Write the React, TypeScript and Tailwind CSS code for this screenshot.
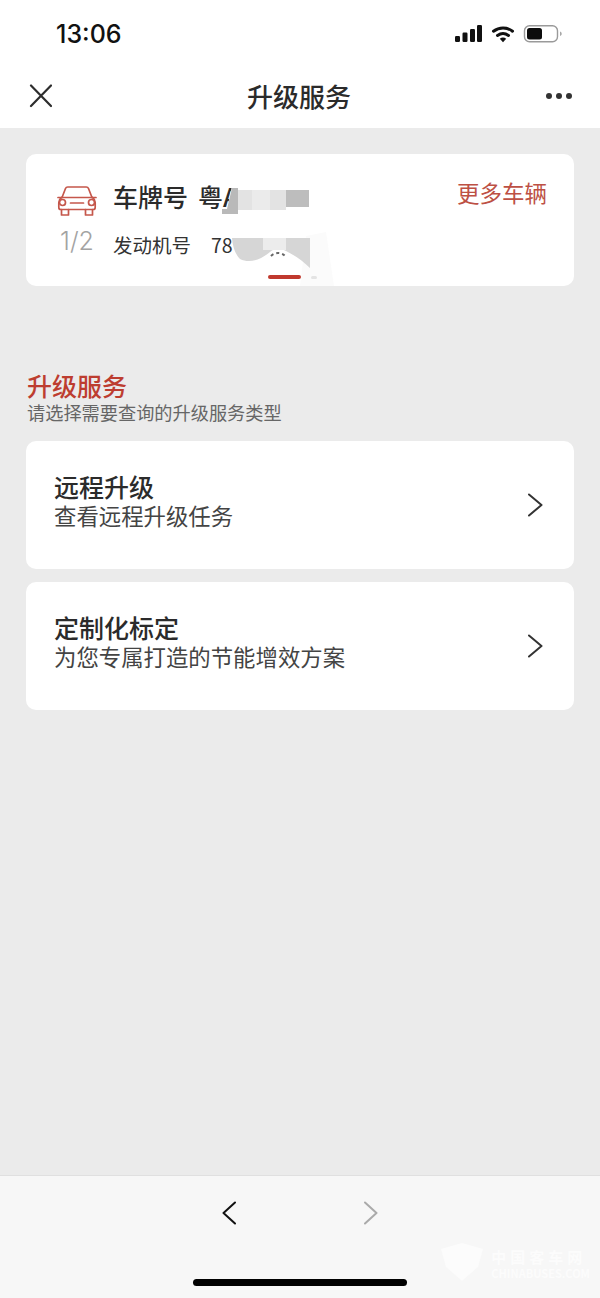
import React from 'react';

const cjk = { fontFamily: '"Noto Sans CJK SC", "Noto Sans", sans-serif' };

const services = [
    { title: '远程升级', desc: '查看远程升级任务' },
    { title: '定制化标定', desc: '为您专属打造的节能增效方案' },
];

const StatusIcons = () => (
    <svg width="110" height="20" viewBox="0 0 110 20" className="block mt-[4px]">
        {/* signal */}
        <rect x="0" y="12" width="5" height="6" rx="1.2" fill="#111" />
        <rect x="7.500" y="8.500" width="5" height="9.500" rx="1.200" fill="#111" />
        <rect x="15" y="5" width="5" height="13" rx="1.200" fill="#111" />
        <rect x="22" y="1" width="5" height="17" rx="1.200" fill="#111" />
        {/* wifi */}
        <path d="M38.500 7.200a15.500 15.500 0 0 1 19 0" fill="none" stroke="#111" strokeWidth="3" strokeLinecap="round" />
        <path d="M42.500 11.500a9.500 9.500 0 0 1 11 0" fill="none" stroke="#111" strokeWidth="3" strokeLinecap="round" />
        <path d="M44.800 14.800 48 18.300l3.200-3.500a5 5 0 0 0-6.400 0Z" fill="#111" />
        {/* battery */}
        <rect x="69.500" y="1.700" width="33" height="16" rx="5" fill="none" stroke="#9a9a9a" strokeWidth="1.400" />
        <rect x="72" y="4" width="15" height="11.500" rx="2.500" fill="#0c0c0c" />
        <path d="M105 7.500c1.400.4 1.700 1.300 1.700 2.200s-.3 1.800-1.700 2.200Z" fill="#a8a8a8" />
    </svg>
);

const CarIcon = () => (
    <svg width="40" height="32" viewBox="0 0 40 32" fill="none" stroke="#c5574b" strokeWidth="1.700" strokeLinejoin="round" strokeLinecap="round">
        <path d="M5 12.500 8.500 3.500c.4-1 1.200-1.500 2.200-1.500h18.600c1 0 1.800.5 2.200 1.500l3.500 9" />
        <path d="M1 12.500h38" />
        <path d="M4.500 12.500C2.500 14 1.800 15.500 1.800 17.500v5c0 1.200.8 2 2 2h32.400c1.200 0 2-.8 2-2v-5c0-2-.7-3.500-2.700-5" />
        <circle cx="5.500" cy="17.500" r="3" />
        <circle cx="34.500" cy="17.500" r="3" />
        <path d="M13.500 18h13" />
        <path d="M4.500 24.500v5.500h7v-5.500M28.500 24.500v5.500h7v-5.500" />
    </svg>
);

const Chevron = ({ left = false, color = '#333', width = 15 }: { left?: boolean; color?: string; width?: number }) => (
    <svg width={width} height="24" viewBox={`0 0 ${width} 24`} fill="none" stroke={color} strokeWidth="2" strokeLinecap="round" strokeLinejoin="round">
        {left
            ? <path d={`M${width - 1} 1.500 1.500 12 ${width - 1} 22.500`} />
            : <path d={`M1 1.500 ${width - 1.5} 12 1 22.500`} />}
    </svg>
);

// Blurred patches covering the plate and engine numbers (viewBox is in page pixels)
const Smudge = () => (
    <svg className="absolute left-[190px] top-[20px]" width="140" height="112" viewBox="216 174 140 112">
        <path d="M306 236 L326 232 L334 286 L300 286 Z" fill="#fbfbfb" />
        <path d="M222 209 L227 209 L232 186 L300 187 C317 185 318 205 308 212 L240 216 L222 214 Z" fill="#ffffff" />
        <path d="M222 214 L222 209 L227 209 L232 188 L238 188 V214 Z" fill="#b9b9b9" />
        <rect x="238" y="190" width="48" height="20" fill="#e3e3e3" />
        <rect x="252" y="190" width="18" height="20" fill="#ebebeb" />
        <rect x="286" y="190" width="23" height="17" fill="#bdbdbd" />
        <path d="M232 238 H310 V268 C304 262 296 256 286 251 C280 248 275 248 270 252 C262 259 250 264 240 259 Q233 252 232 238 Z" fill="#d6d6d6" />
        <rect x="263" y="238" width="23" height="12" fill="#ececec" />
        <path d="M271 256 C275 252 281 252 285 256" fill="none" stroke="#666" strokeWidth="2" strokeDasharray="3 3" />
    </svg>
);

export default function App() {
    return (
        <div className="flex flex-col w-[600px] h-[1298px] bg-[#ebebeb] overflow-hidden" style={cjk}>
            {/* Status bar */}
            <div className="h-[68px] bg-white flex items-start justify-between pt-[20px] pl-[56px] pr-[35px] shrink-0">
                <span className="text-[25px] leading-[28px] font-medium text-[#111]" style={{ fontFamily: 'Inter, sans-serif' }}>13:06</span>
                <StatusIcons />
            </div>

            {/* Nav bar */}
            <div className="h-[60px] bg-white flex items-center justify-between pl-[24px] pr-[26px] pb-[4px] shrink-0">
                <svg width="28" height="24" viewBox="0 0 28 24" fill="none" stroke="#2d2d2d" strokeWidth="2.200" strokeLinecap="round">
                    <path d="M7 1.500 27 22M27 1.500 7 22" />
                </svg>
                <span className="text-[26px] leading-[36px] font-medium text-[#2b2b2b]">升级服务</span>
                <div className="flex gap-[4px] w-[28px]">
                    <span className="w-[6px] h-[6px] rounded-full bg-[#333]" />
                    <span className="w-[6px] h-[6px] rounded-full bg-[#333]" />
                    <span className="w-[6px] h-[6px] rounded-full bg-[#333]" />
                </div>
            </div>

            {/* Content */}
            <div className="flex-1 px-[26px] pt-[26px]">
                <div className="relative h-[132px] bg-white rounded-[10px] flex pl-[31px] pr-[27px] pt-[24px]">
                    <div className="flex flex-col items-center w-[40px] pt-[7px]">
                        <CarIcon />
                        <span className="text-[25px] leading-[28px] mt-[10px] text-[#a3a3a3] font-light" style={{ fontFamily: 'Inter, sans-serif' }}>1/2</span>
                    </div>
                    <div className="ml-[16px] flex-1">
                        <div className="text-[25px] leading-[36px] font-medium text-[#2b2b2b]">车牌号<span className="ml-[10px]">粤A</span></div>
                        <div className="text-[19.500px] leading-[30px] mt-[16px] text-[#333]">发动机号<span className="ml-[20px]">78</span></div>
                    </div>
                    <span className="text-[22.500px] leading-[32px] mt-[-2px] text-[#bd5044]">更多车辆</span>
                    <Smudge />
                    {/* pager */}
                    <div className="absolute left-[242px] top-[121px] flex items-center gap-[10px]">
                        <span className="w-[33px] h-[4px] rounded-full bg-[#c0392e]" />
                        <span className="w-[6px] h-[3px] rounded-full bg-[#e4e4e4]" />
                    </div>
                </div>

                <div className="mt-[84px] pl-[1px]">
                    <div className="text-[25px] leading-[30px] font-medium text-[#bd3d30]">升级服务</div>
                    <div className="text-[18.200px] leading-[24px] text-[#666]">请选择需要查询的升级服务类型</div>
                </div>

                <div className="mt-[17px] flex flex-col gap-[13px]">
                    {services.map((s) => (
                        <div key={s.title} className="h-[128px] bg-white rounded-[10px] flex items-center justify-between pl-[28px] pr-[31px]">
                            <div className="mt-[-10px]">
                                <div className="text-[25px] leading-[30px] font-medium text-[#2b2b2b]">{s.title}</div>
                                <div className="text-[22.400px] leading-[28px] text-[#444]">{s.desc}</div>
                            </div>
                            <Chevron />
                        </div>
                    ))}
                </div>
            </div>

            {/* Bottom toolbar */}
            <div className="relative h-[123px] bg-[#f7f7f7] border-t border-[#e0e0e0] shrink-0 flex flex-col items-center">
                <div className="flex gap-[128px] mt-[25px]">
                    <Chevron left color="#111" width={14} />
                    <Chevron color="#aaaaaa" width={14} />
                </div>
                <div className="w-[214px] h-[7px] rounded-full bg-black mt-[54px]" />
                {/* faint watermark */}
                <div className="absolute right-[10px] top-[67px] flex items-start gap-[7px] text-[#fcfcfc]">
                    <svg width="44" height="38" viewBox="0 0 44 38"><path d="M1 6 22 0l21 6-5 18-16 14L6 24Z" fill="#fcfcfc" /></svg>
                    <div className="flex flex-col mt-[4px]" style={{ fontFamily: '"Noto Sans CJK SC", "Liberation Sans", sans-serif' }}>
                        <span className="text-[15px] leading-[20px] tracking-[4px] font-bold">中国客车网</span>
                        <span className="text-[11px] leading-[12px] font-bold">CHINABUSES.COM</span>
                    </div>
                </div>
            </div>
        </div>
    );
}
